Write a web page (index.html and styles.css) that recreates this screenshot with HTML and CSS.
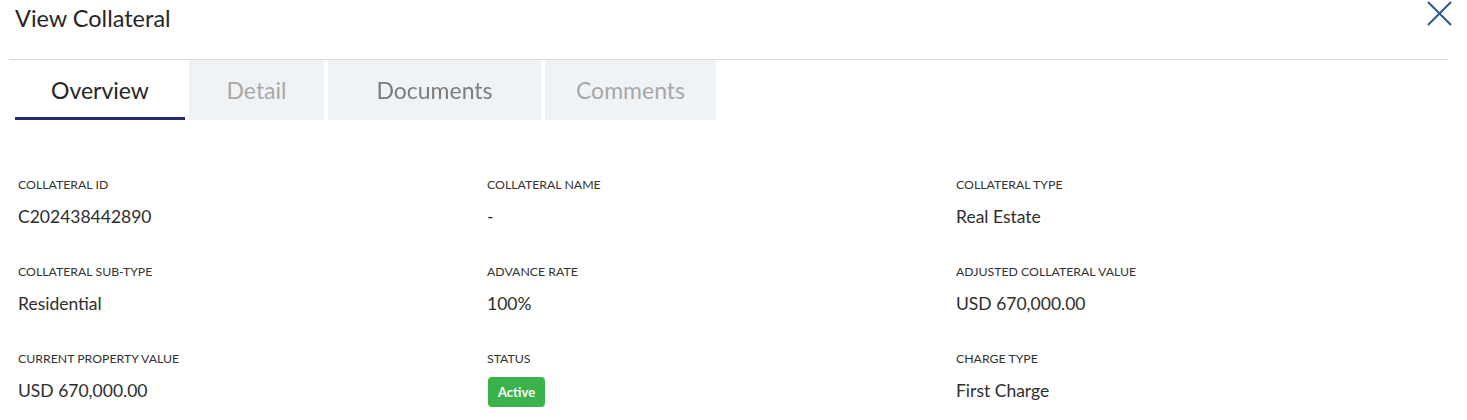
FILE: index.html
```html
<!DOCTYPE html>
<html lang="en">
<head>
    <meta charset="UTF-8">
    <meta name="viewport" content="width=device-width, initial-scale=1.0">
    <title>View Collateral</title>
    <link rel="stylesheet" href="styles.css">
</head>
<body>
    <div class="modal">
        <div class="modal-header">
            <h1>View Collateral</h1>
            <button class="close-btn" aria-label="Close">
                <svg width="25" height="25" viewBox="0 0 25 25">
                    <path d="M1 1 L24 24 M24 1 L1 24" stroke="#2a5b8d" stroke-width="2" fill="none"/>
                </svg>
            </button>
        </div>

        <div class="tabs">
            <div class="tab active">Overview</div>
            <div class="tab tab-detail">Detail</div>
            <div class="tab tab-docs"><span class="blurred">Documents</span></div>
            <div class="tab tab-comments">Comments</div>
        </div>

        <div class="fields">
            <div class="field">
                <div class="label">Collateral ID</div>
                <div class="value">C202438442890</div>
            </div>
            <div class="field">
                <div class="label">Collateral Name</div>
                <div class="value">-</div>
            </div>
            <div class="field">
                <div class="label">Collateral Type</div>
                <div class="value">Real Estate</div>
            </div>
            <div class="field">
                <div class="label">Collateral Sub-Type</div>
                <div class="value">Residential</div>
            </div>
            <div class="field">
                <div class="label">Advance Rate</div>
                <div class="value">100%</div>
            </div>
            <div class="field">
                <div class="label">Adjusted Collateral Value</div>
                <div class="value">USD 670,000.00</div>
            </div>
            <div class="field">
                <div class="label">Current Property Value</div>
                <div class="value">USD 670,000.00</div>
            </div>
            <div class="field">
                <div class="label">Status</div>
                <div class="value"><span class="badge">Active</span></div>
            </div>
            <div class="field">
                <div class="label">Charge Type</div>
                <div class="value">First Charge</div>
            </div>
        </div>
    </div>
</body>
</html>
```

FILE: styles.css
```css
body {
    font-family: 'Lato', 'Noto Sans', sans-serif;
    margin: 0;
    background-color: white;
    color: #2e2e2e;
}

.modal {
    width: 1467px;
    height: 420px;
    overflow: hidden;
}

/* Title row with close button */
.modal-header {
    display: flex;
    justify-content: space-between;
    align-items: flex-start;
    margin: 0 19px 0 9px;
    border-bottom: 1px solid #d9d9d9;
    box-sizing: border-box;
    height: 60px;
}

h1 {
    font-size: 23.5px;
    font-weight: 400;
    margin: 4px 0 0 6px;
    color: #262626;
}

.close-btn {
    background: none;
    border: none;
    padding: 0;
    margin: 1px -4px 0 0;
    cursor: pointer;
}

/* Tabs */
.tabs {
    display: flex;
    gap: 4px;
    margin-left: 15px;
    height: 60px;
}

.tab {
    display: flex;
    align-items: center;
    justify-content: center;
    font-size: 23px;
    color: #a8a8a8;
    background-color: #f0f3f6;
    box-sizing: border-box;
}

.tab.active {
    width: 170px;
    background-color: white;
    color: #262626;
    border-bottom: 3px solid #262a6e;
    padding-top: 3px;
}

.tab-detail {
    width: 135px;
}

.tab-docs {
    width: 213px;
}

.blurred {
    color: #7d7d7d;
    filter: blur(0.6px);
}

.tab-comments {
    width: 171px;
}

/* Detail fields */
.fields {
    display: grid;
    grid-template-columns: 469px 469px 469px;
    margin: 57px 0 0 18px;
    row-gap: 30px;
}

.label {
    font-size: 12.3px;
    text-transform: uppercase;
    color: #333;
    height: 16px;
}

.value {
    font-size: 17.5px;
    margin-top: 13px;
    height: 28px;
    color: #2e2e2e;
}

.badge {
    display: inline-block;
    background-color: #3ab34a;
    color: white;
    font-size: 13px;
    font-weight: bold;
    padding: 0 10px;
    line-height: 30px;
    border-radius: 4px;
    margin: -3px 0 0 1px;
    vertical-align: top;
}
```
